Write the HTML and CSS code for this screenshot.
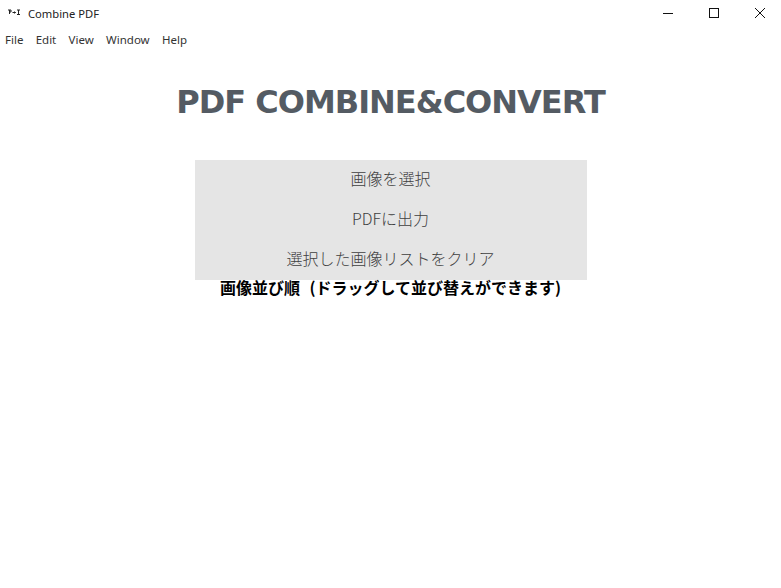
FILE: index.html
```html
<!DOCTYPE html>
<html lang="ja">
<head>
    <meta charset="UTF-8">
    <meta name="viewport" content="width=device-width, initial-scale=1.0">
    <title>Combine PDF</title>
    <link rel="stylesheet" href="styles.css">
</head>
<body>

<!-- Title bar -->
<div class="titlebar">
    <svg class="app-icon" width="16" height="16" viewBox="0 0 16 16" fill="none" stroke="#222" stroke-width="1">
        <path d="M3.5 9V5M2 5h3v2H3.5"/>
        <path d="M6.5 7.5h3M8.5 6.5l1 1-1 1"/>
        <path d="M11 5h3M12.5 5v4.5M11 9.5h3"/>
    </svg>
    <span class="app-name">Combine PDF</span>
    <div class="window-buttons">
        <svg class="window-button" width="46" height="26" viewBox="0 0 46 26" stroke="#111" fill="none">
            <path d="M18 13.5h10"/>
        </svg>
        <svg class="window-button" width="46" height="26" viewBox="0 0 46 26" stroke="#111" fill="none">
            <rect x="18.5" y="8.5" width="9" height="9"/>
        </svg>
        <svg class="window-button" width="46" height="26" viewBox="0 0 46 26" stroke="#111" fill="none">
            <path d="M18 8l10 10M28 8L18 18"/>
        </svg>
    </div>
</div>

<!-- Menu bar -->
<nav class="menubar">
    <span class="menu-item">File</span>
    <span class="menu-item">Edit</span>
    <span class="menu-item">View</span>
    <span class="menu-item">Window</span>
    <span class="menu-item">Help</span>
</nav>

<main class="content">
    <h1 class="page-title">PDF COMBINE&amp;CONVERT</h1>

    <div class="button-list">
        <button class="action-button">画像を選択</button>
        <button class="action-button">PDFに出力</button>
        <button class="action-button">選択した画像リストをクリア</button>
    </div>

    <p class="list-label">画像並び順 (ドラッグして並び替えができます)</p>
</main>

</body>
</html>
```

FILE: styles.css
```css
body {
    margin: 0;
    height: 588px;
    overflow: hidden;
    background-color: #fff;
    font-family: "Noto Sans", "Noto Sans CJK JP", sans-serif;
}

.titlebar {
    display: flex;
    align-items: center;
    height: 26px;
    padding-left: 6px;
}

.app-icon {
    margin-right: 6px;
}

.app-name {
    font-size: 11.2px;
    color: #222;
}

.window-buttons {
    display: flex;
    margin-left: auto;
    margin-right: -2px;
}

.window-button {
    display: block;
}

.menubar {
    display: flex;
    gap: 12.3px;
    height: 26px;
    padding-left: 5px;
    align-items: center;
    font-size: 11.5px;
    color: #333;
}

.content {
    display: flex;
    flex-direction: column;
    align-items: center;
}

.page-title {
    margin: 25px 0 33px;
    font-family: "DejaVu Sans", sans-serif;
    font-size: 32px;
    line-height: 50px;
    font-weight: bold;
    letter-spacing: -1px;
    color: #545b63;
}

.button-list {
    display: flex;
    flex-direction: column;
    width: 392px;
    height: 120px;
    background-color: #e5e5e5;
}

.action-button {
    height: 40px;
    padding: 0 0 4px;
    border: none;
    background: transparent;
    font-family: "Noto Sans CJK JP", sans-serif;
    font-size: 16px;
    font-weight: 300;
    color: #404040;
    cursor: pointer;
}

.list-label {
    margin: 0;
    font-family: "Noto Sans CJK JP", sans-serif;
    font-size: 16px;
    line-height: 14px;
    font-weight: bold;
    word-spacing: 6px;
    color: #000;
}
```
